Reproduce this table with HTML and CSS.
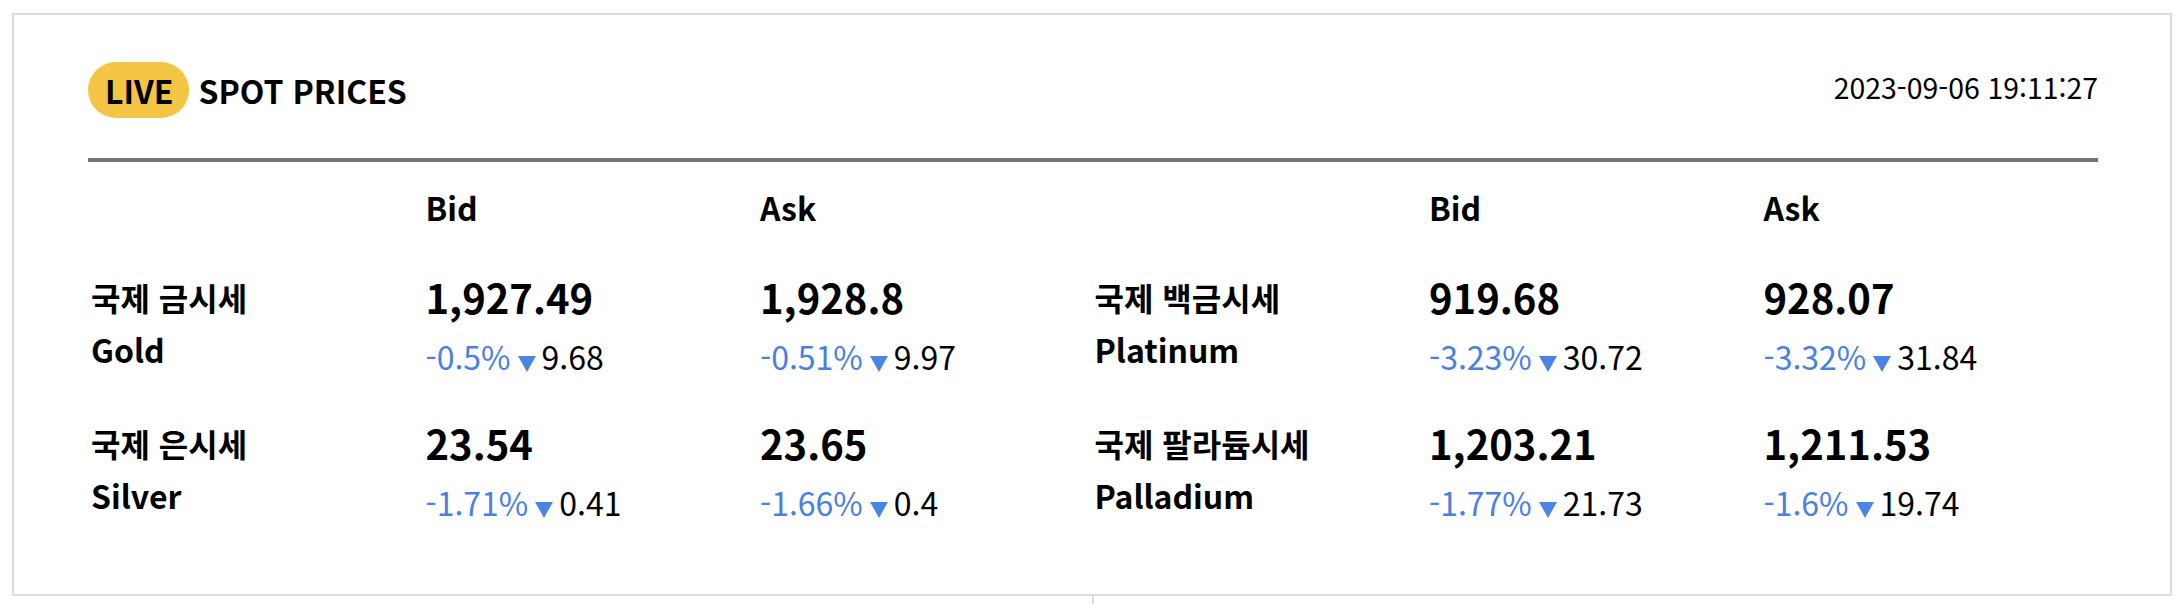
FILE: index.html
```html
<!DOCTYPE html>
<html lang="ko">
<head>
<meta charset="utf-8">
<title>Live Spot Prices</title>
<link rel="stylesheet" href="styles.css">
</head>
<body>
<section class="card">
  <header class="card-head">
    <h1 class="title"><span class="badge">LIVE</span><span class="title-text">SPOT PRICES</span></h1>
    <time class="stamp">2023-09-06 19:11:27</time>
  </header>
  <div class="rule"></div>
  <div class="table">
    <div class="row head">
      <div></div>
      <div class="col-title">Bid</div>
      <div class="col-title">Ask</div>
      <div></div>
      <div class="col-title">Bid</div>
      <div class="col-title">Ask</div>
    </div>
    <div class="row">
      <div class="name"><div class="ko">국제 금시세</div><div class="en">Gold</div></div>
      <div class="quote"><div class="price">1,927.49</div><div class="change"><span class="pct">-0.5%</span><span class="tri"></span><span class="diff">9.68</span></div></div>
      <div class="quote"><div class="price">1,928.8</div><div class="change"><span class="pct">-0.51%</span><span class="tri"></span><span class="diff">9.97</span></div></div>
      <div class="name"><div class="ko">국제 백금시세</div><div class="en">Platinum</div></div>
      <div class="quote"><div class="price">919.68</div><div class="change"><span class="pct">-3.23%</span><span class="tri"></span><span class="diff">30.72</span></div></div>
      <div class="quote"><div class="price">928.07</div><div class="change"><span class="pct">-3.32%</span><span class="tri"></span><span class="diff">31.84</span></div></div>
    </div>
    <div class="row">
      <div class="name"><div class="ko">국제 은시세</div><div class="en">Silver</div></div>
      <div class="quote"><div class="price">23.54</div><div class="change"><span class="pct">-1.71%</span><span class="tri"></span><span class="diff">0.41</span></div></div>
      <div class="quote"><div class="price">23.65</div><div class="change"><span class="pct">-1.66%</span><span class="tri"></span><span class="diff">0.4</span></div></div>
      <div class="name"><div class="ko">국제 팔라듐시세</div><div class="en">Palladium</div></div>
      <div class="quote"><div class="price">1,203.21</div><div class="change"><span class="pct">-1.77%</span><span class="tri"></span><span class="diff">21.73</span></div></div>
      <div class="quote"><div class="price">1,211.53</div><div class="change"><span class="pct">-1.6%</span><span class="tri"></span><span class="diff">19.74</span></div></div>
    </div>
  </div>
</section>
<div class="below">
  <div></div>
  <div></div>
</div>
</body>
</html>
```
FILE: styles.css
```css
html, body {
  margin: 0;
  padding: 0;
  background: #ffffff;
}

body {
  font-family: "Noto Sans CJK KR", "Noto Sans", sans-serif;
  color: #000000;
}

.card {
  margin: 13px 12px 0 12px;
  border: 2px solid #dddddd;
  padding: 47px 72px 61px 74px;
}

.card-head {
  display: flex;
  align-items: center;
  justify-content: space-between;
  height: 56px;
}

.title {
  display: flex;
  align-items: center;
  margin: 0;
  font-size: 32px;
  font-weight: 700;
  line-height: 56px;
}

.badge {
  display: inline-block;
  height: 56px;
  padding: 0 15px 0 17px;
  border-radius: 28px;
  background: #f4c444;
  line-height: 56px;
}

.title-text {
  margin-left: 10px;
}

.stamp {
  font-size: 28.4px;
  font-weight: 400;
  margin-bottom: 7px;
}

.rule {
  height: 4px;
  background: #777777;
  margin-top: 40px;
}

.table {
  padding-left: 3px;
}

.row {
  display: grid;
  grid-template-columns: repeat(6, 1fr);
  align-items: start;
}

.row.head {
  margin-top: 22px;
  margin-bottom: 41px;
}

.row + .row {
  margin-top: 30px;
}

.col-title {
  font-size: 32px;
  font-weight: 700;
  line-height: 46px;
}

.name {
  font-size: 32px;
  font-weight: 700;
  line-height: 52px;
}

.price {
  font-size: 40px;
  font-weight: 700;
  line-height: 52px;
}

.change {
  margin-top: 2px;
  font-size: 32px;
  font-weight: 400;
  line-height: 62px;
  white-space: nowrap;
}

.pct {
  color: #4a80e0;
}

.tri {
  display: inline-block;
  width: 0;
  height: 0;
  border-left: 9.5px solid transparent;
  border-right: 9.5px solid transparent;
  border-top: 16px solid #4a84e4;
  margin: 0 6px 0 7px;
  vertical-align: -2px;
}

.diff {
  color: #000000;
}

.below {
  display: grid;
  grid-template-columns: 1fr 1fr;
  margin: 0 12px;
  height: 40px;
}

.below > div + div {
  border-left: 2px solid #dddddd;
}
```
